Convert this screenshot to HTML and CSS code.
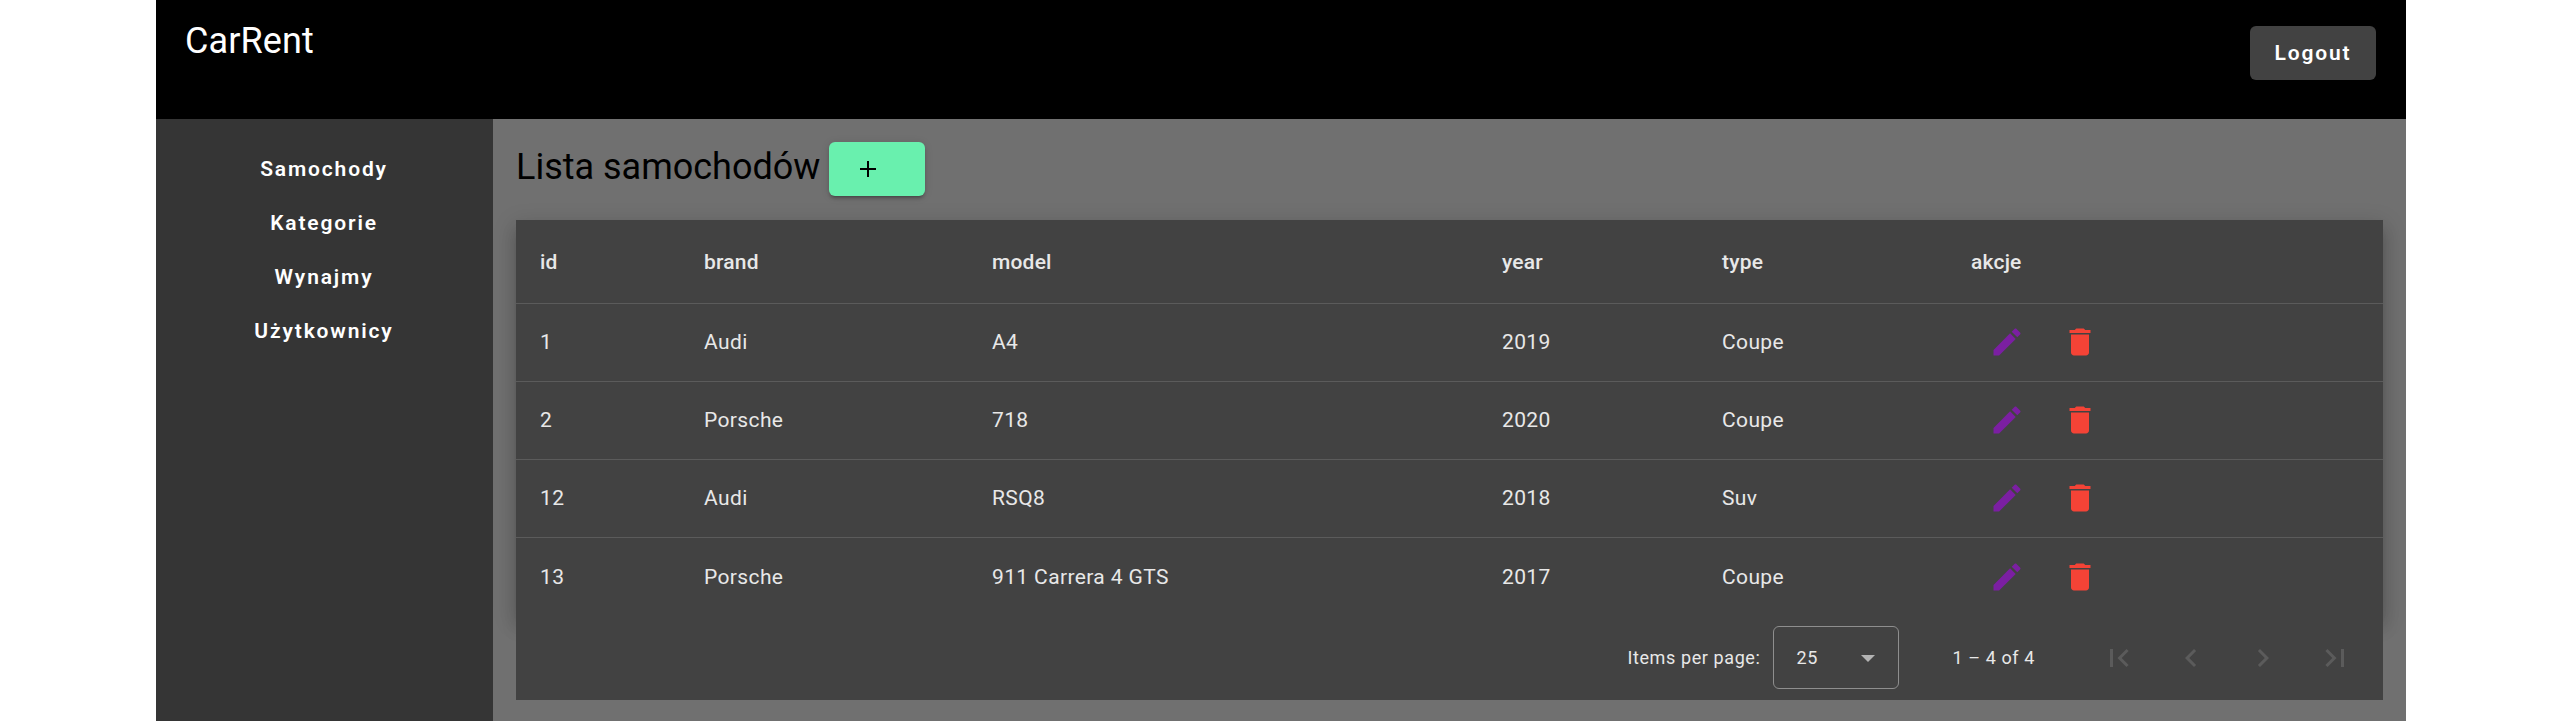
FILE: index.html
```
<!DOCTYPE html>
<html lang="pl">
<head>
<meta charset="utf-8">
<title>CarRent</title>
<link rel="stylesheet" href="styles.css">
</head>
<body>
<svg class="sprite" aria-hidden="true">
  <symbol id="edit" viewBox="0 0 24 24"><path d="M3 17.25V21h3.75L17.81 9.94l-3.75-3.75L3 17.25zM20.71 7.04c.39-.39.39-1.02 0-1.41l-2.34-2.34c-.39-.39-1.02-.39-1.41 0l-1.83 1.83 3.75 3.75 1.83-1.83z"/></symbol>
  <symbol id="delete" viewBox="0 0 24 24"><path d="M6 19c0 1.100.900 2 2 2h8c1.100 0 2-.900 2-2V7H6v12zM19 4h-3.500l-1-1h-5l-1 1H5v2h14V4z"/></symbol>
</svg>
<div class="app">
  <header class="header">
    <div class="logo">CarRent</div>
    <button class="logout">Logout</button>
  </header>
  <div class="body">
    <nav class="sidebar">
      <a class="nav-item">Samochody</a>
      <a class="nav-item">Kategorie</a>
      <a class="nav-item">Wynajmy</a>
      <a class="nav-item">Użytkownicy</a>
    </nav>
    <main class="content">
      <div class="heading">
        <h1 class="title">Lista samochodów</h1>
        <button class="add" aria-label="Dodaj"><svg class="plus" viewBox="0 0 16 16"><path d="M8 0v16M0 8h16"/></svg></button>
      </div>
      <table class="table">
        <colgroup><col class="c-id"><col class="c-brand"><col class="c-model"><col class="c-year"><col class="c-type"><col></colgroup>
        <thead><tr><th>id</th><th>brand</th><th>model</th><th>year</th><th>type</th><th>akcje</th></tr></thead>
        <tbody>
          <tr><td>1</td><td>Audi</td><td>A4</td><td>2019</td><td>Coupe</td><td><div class="actions"><svg class="icon edit"><use href="#edit"/></svg><svg class="icon delete"><use href="#delete"/></svg></div></td></tr>
          <tr><td>2</td><td>Porsche</td><td>718</td><td>2020</td><td>Coupe</td><td><div class="actions"><svg class="icon edit"><use href="#edit"/></svg><svg class="icon delete"><use href="#delete"/></svg></div></td></tr>
          <tr><td>12</td><td>Audi</td><td>RSQ8</td><td>2018</td><td>Suv</td><td><div class="actions"><svg class="icon edit"><use href="#edit"/></svg><svg class="icon delete"><use href="#delete"/></svg></div></td></tr>
          <tr><td>13</td><td>Porsche</td><td>911 Carrera 4 GTS</td><td>2017</td><td>Coupe</td><td><div class="actions"><svg class="icon edit"><use href="#edit"/></svg><svg class="icon delete"><use href="#delete"/></svg></div></td></tr>
        </tbody>
      </table>
      <div class="paginator">
        <span class="per-page">Items per page:</span>
        <div class="select"><span>25</span><span class="arrow"></span></div>
        <span class="range">1 – 4 of 4</span>
        <div class="pages">
          <svg class="page-icon" viewBox="0 0 24 24"><path d="M18.410 16.590L13.820 12l4.590-4.590L17 6l-6 6 6 6zM6 6h2v12H6z"/></svg>
          <svg class="page-icon" viewBox="0 0 24 24"><path d="M15.410 7.410L14 6l-6 6 6 6 1.410-1.410L10.830 12z"/></svg>
          <svg class="page-icon" viewBox="0 0 24 24"><path d="M10 6L8.590 7.410 13.170 12l-4.580 4.590L10 18l6-6z"/></svg>
          <svg class="page-icon" viewBox="0 0 24 24"><path d="M5.590 7.410L10.180 12l-4.590 4.590L7 18l6-6-6-6zM16 6h2v12h-2z"/></svg>
        </div>
      </div>
    </main>
  </div>
</div>
</body>
</html>
```
FILE: styles.css
```
* { box-sizing: border-box; }
body {
  margin: 0;
  background: #fff;
  font-family: Roboto, sans-serif;
  overflow: hidden;
}
.sprite { display: none; }
.app {
  width: 2250px;
  height: 721px;
  margin: 0 auto 0 156px;
  display: flex;
  flex-direction: column;
  overflow: hidden;
}
.header {
  height: 119px;
  flex: none;
  display: flex;
  justify-content: space-between;
  align-items: flex-start;
  padding: 26px 30px 0 29px;
  background: #000;
  color: #fff;
}
.logo {
  font-size: 36px;
  line-height: 42px;
  letter-spacing: 0.1px;
  margin-top: -6px;
}
button {
  border: 0;
  border-radius: 6px;
  font-family: inherit;
}
.logout {
  width: 126px;
  height: 54px;
  padding: 0;
  background: #424242;
  color: #fff;
  font-size: 21px;
  font-weight: 600;
  letter-spacing: 1.875px;
}
.body {
  flex: 1;
  display: flex;
  min-height: 0;
}
.sidebar {
  width: 337px;
  flex: none;
  padding-top: 23px;
  display: flex;
  flex-direction: column;
  background: #353535;
}
.nav-item {
  height: 54px;
  line-height: 54px;
  padding-right: 1px;
  text-align: center;
  color: #fff;
  font-size: 21px;
  font-weight: 600;
  letter-spacing: 1.85px;
}
.content {
  flex: 1;
  padding: 23px 23px 0;
  background: #707070;
}
.heading {
  height: 78px;
  display: flex;
  align-items: flex-start;
}
.title {
  width: 313px;
  margin: 0;
  font-size: 36px;
  font-weight: 400;
  line-height: 50px;
  white-space: nowrap;
}
.add {
  width: 96px;
  height: 54px;
  padding: 0 0 0 31px;
  display: flex;
  align-items: center;
  background: #69f0ae;
  box-shadow: 0 4px 2px -3px rgba(0,0,0,.2), 0 3px 3px rgba(0,0,0,.14), 0 1px 8px rgba(0,0,0,.12);
}
.plus {
  width: 16px;
  height: 16px;
  margin-bottom: 1px;
  fill: none;
  stroke: #000;
  stroke-width: 2;
}
.table {
  width: 100%;
  table-layout: fixed;
  border-collapse: separate;
  border-spacing: 0;
  background: #424242;
  color: #e8e8e8;
  font-size: 21px;
  box-shadow: 0 7.5px 7.5px -4.5px rgba(0,0,0,.2), 0 12px 15px 1.5px rgba(0,0,0,.14), 0 4.5px 21px 3px rgba(0,0,0,.12);
}
.c-id { width: 164px; }
.c-brand { width: 288px; }
.c-model { width: 510px; }
.c-year { width: 220px; }
.c-type { width: 249px; }
.table th, .table td {
  height: 78px;
  padding: 0 24px 1px;
  text-align: left;
  letter-spacing: 0.375px;
  border-bottom: 1px solid #5b5b5b;
}
.table th {
  height: 84px;
  padding-bottom: 0;
  font-weight: 500;
  letter-spacing: 0.2px;
}
.table tbody tr:last-child td { border-bottom: 0; }
.actions { display: flex; gap: 37px; padding-left: 18px; }
.icon { width: 36px; height: 36px; }
.edit { fill: #7b1fa2; }
.delete { fill: #f44336; }
.paginator {
  position: relative;
  height: 84px;
  display: flex;
  align-items: center;
  justify-content: flex-end;
  padding: 0 12px 1px 0;
  background: #424242;
  color: #e8e8e8;
  font-size: 18px;
  letter-spacing: 0.6px;
}
.select {
  width: 126px;
  height: 63px;
  margin: 0 53px 0 13px;
  padding: 0 23px 0 22px;
  display: flex;
  align-items: center;
  justify-content: space-between;
  border: 1px solid #8e8e8e;
  border-radius: 6px;
}
.arrow {
  margin-top: 2px;
  border: 7.5px solid transparent;
  border-top-color: #b3b3b3;
  border-bottom: 0;
}
.range { margin-right: 48px; }
.pages { display: flex; }
.page-icon {
  width: 72px;
  height: 36px;
  fill: #5b5b5b;
}
```
